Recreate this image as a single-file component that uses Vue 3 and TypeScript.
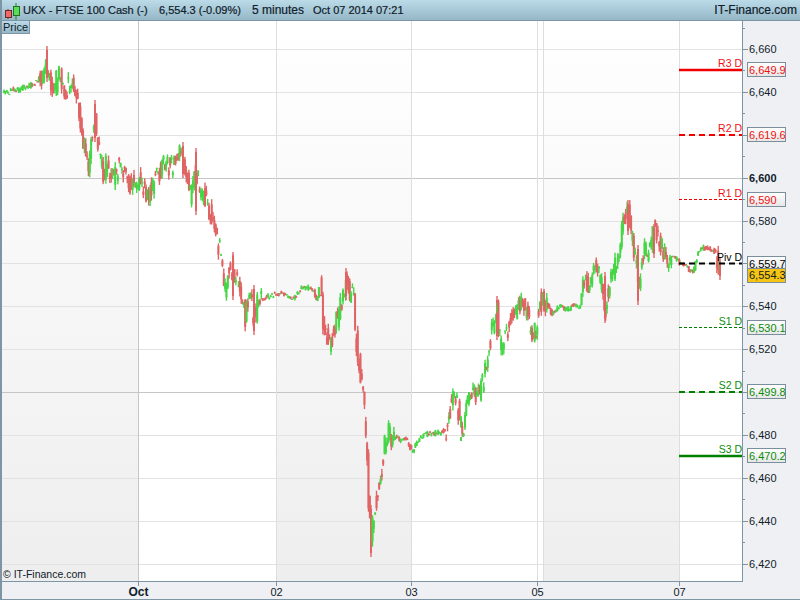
<script setup lang="ts">
interface Bar { x: number; open: number; close: number; high: number; low: number }

const way: number[][] = [
  [4,91],[8,93],[12,90],[16,92],[20,88],[26,87],[35,83],[42,75],[46,60],[48,72],[50,86],[54,85],[60,74],[62,88],[66,90],[70,80],[74,92],[78,98],[80,122],[83,147],[88,165],[95,123],[97,137],[100,153],[103,173],[107,163],[110,183],[117,170],[120,160],[125,180],[128,185],[135,178],[143,182],[146,197],[150,190],[157,177],[163,167],[173,168],[182,152],[185,167],[190,197],[195,167],[200,190],[207,203],[212,220],[217,237],[222,263],[225,290],[230,267],[233,270],[237,277],[240,287],[245,317],[250,297],[254,320],[258,300],[265,298],[272,295],[283,293],[293,300],[302,288],[312,288],[317,300],[320,283],[323,323],[330,343],[337,320],[343,297],[347,275],[350,297],[353,283],[355,327],[358,357],[362,383],[365,418],[367,457],[368,490],[371,543],[373,517],[378,490],[382,467],[385,443],[389,430],[392,443],[395,437],[400,440],[407,440],[412,452],[416,442],[420,437],[430,433],[440,433],[447,428],[450,410],[454,387],[458,410],[463,430],[466,410],[468,393],[473,387],[478,397],[483,383],[487,357],[490,343],[495,310],[497,300],[499,337],[502,350],[505,333],[510,323],[513,307],[517,312],[521,303],[526,313],[531,330],[536,332],[539,303],[543,300],[548,307],[552,315],[560,305],[567,310],[573,305],[580,307],[583,282],[590,283],[597,263],[602,290],[605,310],[610,280],[617,263],[622,230],[628,207],[630,223],[633,247],[637,263],[639,287],[642,253],[648,250],[654,230],[658,240],[663,250],[667,260],[670,258],[675,258],[680,263],[687,268],[693,273],[698,253],[703,248],[710,248],[715,253],[718,265],[720,270]
];

const calm: number[][] = [[4,40],[262,320],[395,446],[548,582],[672,716]];
const spikes: number[][] = [
  [47,46,82],[95,100,142],[183,142,178],[196,148,215],[233,252,300],[254,285,335],[346,268,300],[371,505,557],
  [461,437,441],[497,296,340],[638,245,305],[605,272,323],[628,200,235],[654,224,258],[720,258,280]
];

let seed = 20141007;
function rnd(): number {
  seed = (seed * 1664525 + 1013904223) % 4294967296;
  return seed / 4294967296;
}
function centre(x: number): number {
  for (let i = 1; i < way.length; i++) {
    if (x <= way[i][0]) {
      const [x0, y0] = way[i - 1];
      const [x1, y1] = way[i];
      return y0 + ((y1 - y0) * (x - x0)) / (x1 - x0);
    }
  }
  return way[way.length - 1][1];
}
const bars: Bar[] = [];
const step = 1.34;
for (let x = 4; x <= 720; x += step) {
  const quiet = calm.some(([a, b]) => x >= a && x <= b);
  const amp = quiet ? 2.6 : 11;
  const open = centre(x - step) + (rnd() - 0.5) * amp * 2;
  const close = centre(x) + (rnd() - 0.5) * amp * 2;
  const top = Math.min(open, close);
  const bot = Math.max(open, close);
  bars.push({
    x,
    open, close,
    high: top - rnd() * amp * 0.5,
    low: bot + rnd() * amp * 0.5,
  });
}
for (const [sx, hi, lo] of spikes) {
  bars.push({ x: sx, open: hi + 4, close: lo - 4, high: hi, low: lo });
}
bars.sort((a, b) => a.x - b.x);

const hidden = [620, 560, 500];
const hTicks = [660,640,620,600,580,560,540,520,500,480,460,440,420].map((v) => ({
  v, y: 49 + ((6660 - (6000 + v)) * 514.5) / 240,
  label: '6,' + v, strong: v === 600 || v === 500,
}));
const tickLabels = hTicks.filter((t) => !hidden.includes(t.v));
const hMinor = hTicks.slice(0, -1).map((t) => t.y + 21.45);
hMinor.unshift(hTicks[0].y - 21.45);

const bands = [[2,138],[276,411],[543,679]];
const vLines = [
  { x: 138, strong: true }, { x: 276, strong: false }, { x: 411, strong: false },
  { x: 537, strong: false }, { x: 543, strong: false }, { x: 679, strong: false },
];
const xLabels = [
  { x: 138, t: 'Oct', bold: true }, { x: 276, t: '02', bold: false }, { x: 411, t: '03', bold: false },
  { x: 537, t: '05', bold: false }, { x: 679, t: '07', bold: false },
];

const levels = [
  { name: 'R3 D', val: '6,649.9', y: 70, kind: 'red', w: 2.5, dash: '' },
  { name: 'R2 D', val: '6,619.6', y: 135, kind: 'red', w: 2, dash: '6 4' },
  { name: 'R1 D', val: '6,590', y: 199.5, kind: 'red', w: 1, dash: '3 2' },
  { name: 'Piv D', val: '6,559.7', y: 263.5, kind: 'black', w: 2, dash: '6 4' },
  { name: 'S1 D', val: '6,530.1', y: 327.5, kind: 'green', w: 1, dash: '3 2' },
  { name: 'S2 D', val: '6,499.8', y: 392, kind: 'green', w: 2, dash: '6 4' },
  { name: 'S3 D', val: '6,470.2', y: 456, kind: 'green', w: 2.5, dash: '' },
];
</script>

<template>
  <div class="page">
    <header class="top">
      <svg class="logo" width="20" height="20" viewBox="0 0 20 20">
        <path d="M6 9v10" stroke="#b01818" />
        <rect x="3.5" y="10.5" width="6" height="7" fill="#ee6a6a" stroke="#6a2a2a" />
        <path d="M14 3v17" stroke="#1c8a1c" />
        <rect x="11.5" y="6.5" width="6" height="9" fill="#55e055" stroke="#2a6a2a" />
      </svg>
      <span class="name">UKX - FTSE 100 Cash (-)</span>
      <span class="quote">6,554.3 (-0.09%)</span>
      <span class="period">5 minutes</span>
      <span class="stamp">Oct 07 2014 07:21</span>
      <span class="brand">IT-Finance.com</span>
    </header>

    <div class="middle">
      <div class="plot">
        <svg class="chart" width="740" height="560" viewBox="2 21 740 560">
          <defs>
            <linearGradient id="band" x1="0" y1="21" x2="0" y2="581" gradientUnits="userSpaceOnUse">
              <stop offset="0" stop-color="#ffffff" />
              <stop offset="1" stop-color="#eeeeee" />
            </linearGradient>
          </defs>
          <rect x="2" y="21" width="740" height="560" fill="#ffffff" />
          <rect v-for="b in bands" :key="b[0]" :x="b[0]" y="21" :width="b[1] - b[0]" height="560" fill="url(#band)" />
          <g shape-rendering="crispEdges">
            <rect
              v-for="t in hTicks" :key="t.v"
              x="2" :y="Math.round(t.y)" width="740" height="1"
              :fill="t.strong ? '#c6c6c6' : '#e2e2e2'"
            />
            <rect
              v-for="l in vLines" :key="l.x"
              :x="l.x" y="21" width="1" height="560"
              :fill="l.strong ? '#c6c6c6' : '#dedede'"
            />
          </g>
          <g v-for="(b, i) in bars" :key="i">
            <rect
              :x="b.x - 0.7" :y="b.high" width="1.4" :height="b.low - b.high"
              :fill="b.close >= b.open ? '#e06464' : '#46d646'"
            />
            <rect
              :x="b.x - 1" :y="Math.min(b.open, b.close)" width="2"
              :height="Math.max(1, Math.abs(b.close - b.open))"
              :fill="b.close >= b.open ? '#e06464' : '#46d646'"
            />
          </g>
          <g v-for="l in levels" :key="l.name">
            <line
              x1="679" x2="742" :y1="l.y" :y2="l.y"
              :class="'stroke-' + l.kind" :stroke-width="l.w" :stroke-dasharray="l.dash"
            />
            <text x="742" :y="l.y - 3" text-anchor="end" class="level" :class="'fill-' + l.kind">{{ l.name }}</text>
          </g>
        </svg>
        <div class="tab">Price</div>
        <div class="copy">© IT-Finance.com</div>
      </div>

      <svg class="yaxis" width="58" height="560" viewBox="742 21 58 560">
        <defs>
          <linearGradient id="tag" x1="0" y1="0" x2="0" y2="1">
            <stop offset="0" stop-color="#ffffff" />
            <stop offset="1" stop-color="#e6e6e6" />
          </linearGradient>
        </defs>
        <g shape-rendering="crispEdges">
          <rect x="742" y="21" width="1" height="560" fill="#7d95a5" />
          <rect v-for="m in hMinor" :key="m" x="743" :y="Math.round(m)" width="2" height="1" fill="#7d95a5" />
          <rect v-for="t in hTicks" :key="t.v" x="743" :y="Math.round(t.y)" width="5" height="1" fill="#7d95a5" />
        </g>
        <text v-for="t in tickLabels" :key="t.v" x="749" :y="Math.round(t.y) + 4" class="tick" :class="{ strong: t.strong }">{{ t.label }}</text>
        <g v-for="l in levels" :key="l.val">
          <rect x="747.5" :y="Math.round(l.y) - 7.5" width="38" height="14" fill="url(#tag)" stroke="#7b8e9b" shape-rendering="crispEdges" />
          <text x="749" :y="Math.round(l.y) + 4" class="tick" :class="'fill-' + l.kind">{{ l.val }}</text>
        </g>
        <rect x="747.5" y="268.5" width="38" height="14" fill="#f6c412" stroke="#7b8e9b" shape-rendering="crispEdges" />
        <text x="749" y="279" class="tick">6,554.3</text>
      </svg>
    </div>

    <svg class="xaxis" width="798" height="18" viewBox="2 581 798 18">
      <rect x="2" y="581" width="741" height="1" fill="#7d95a5" shape-rendering="crispEdges" />
      <g v-for="l in xLabels" :key="l.t">
        <rect :x="l.x" y="582" width="1" height="4" fill="#7d95a5" shape-rendering="crispEdges" />
        <text :x="l.x + 0.5" y="596" text-anchor="middle" class="xlabel" :class="{ bold: l.bold }">{{ l.t }}</text>
      </g>
    </svg>
  </div>
</template>

<style>
html, body { margin: 0; background: #eef0f3; }
</style>

<style scoped>
.page {
  width: 800px;
  height: 600px;
  box-sizing: border-box;
  border-left: 2px solid #7d95a5;
  border-bottom: 1px solid #7d95a5;
  background: #eef0f3;
  display: flex;
  flex-direction: column;
  font-family: "Liberation Sans", Arial, sans-serif;
  overflow: hidden;
}
.top {
  height: 20px;
  flex: none;
  margin-left: -2px;
  box-sizing: content-box;
  border-bottom: 1px solid #7d95a5;
  background: linear-gradient(#bcdbe9, #95b7c6);
  display: flex;
  align-items: center;
  font-size: 11px;
  color: #10202a;
  -webkit-text-stroke: 0.2px #10202a;
  white-space: nowrap;
}
.logo { flex: none; margin-left: 2px; }
.name { margin-left: 1px; width: 136px; }
.quote { width: 93px; }
.period { width: 61px; font-size: 12px; }
.brand { margin-left: auto; margin-right: 3px; font-size: 12px; }
.middle { flex: none; height: 560px; display: flex; }
.plot { position: relative; width: 740px; height: 560px; flex: none; }
.chart, .yaxis, .xaxis { display: block; flex: none; }
.tab {
  position: absolute;
  left: -2px;
  top: 0;
  width: 26px;
  height: 12px;
  line-height: 13px;
  padding-left: 3px;
  font-size: 11px;
  color: #10202a;
  border-right: 1px solid #7d95a5;
  border-bottom: 1px solid #7d95a5;
  background: linear-gradient(#bcdbe9, #95b7c6);
}
.copy {
  position: absolute;
  left: 1px;
  bottom: 0;
  font-size: 10.5px;
  line-height: 13px;
  color: #10202a;
}
.level { font-size: 10.5px; }
.tick { font-size: 11px; fill: #10202a; }
.tick.strong { font-weight: bold; }
.xlabel { font-size: 11px; fill: #10202a; }
.xlabel.bold { font-size: 12px; font-weight: bold; }
.fill-red { fill: #f01010; }
.fill-green { fill: #0c8c0c; }
.fill-black { fill: #000000; }
.stroke-red { stroke: #f00000; }
.stroke-green { stroke: #008000; }
.stroke-black { stroke: #000000; }
</style>
